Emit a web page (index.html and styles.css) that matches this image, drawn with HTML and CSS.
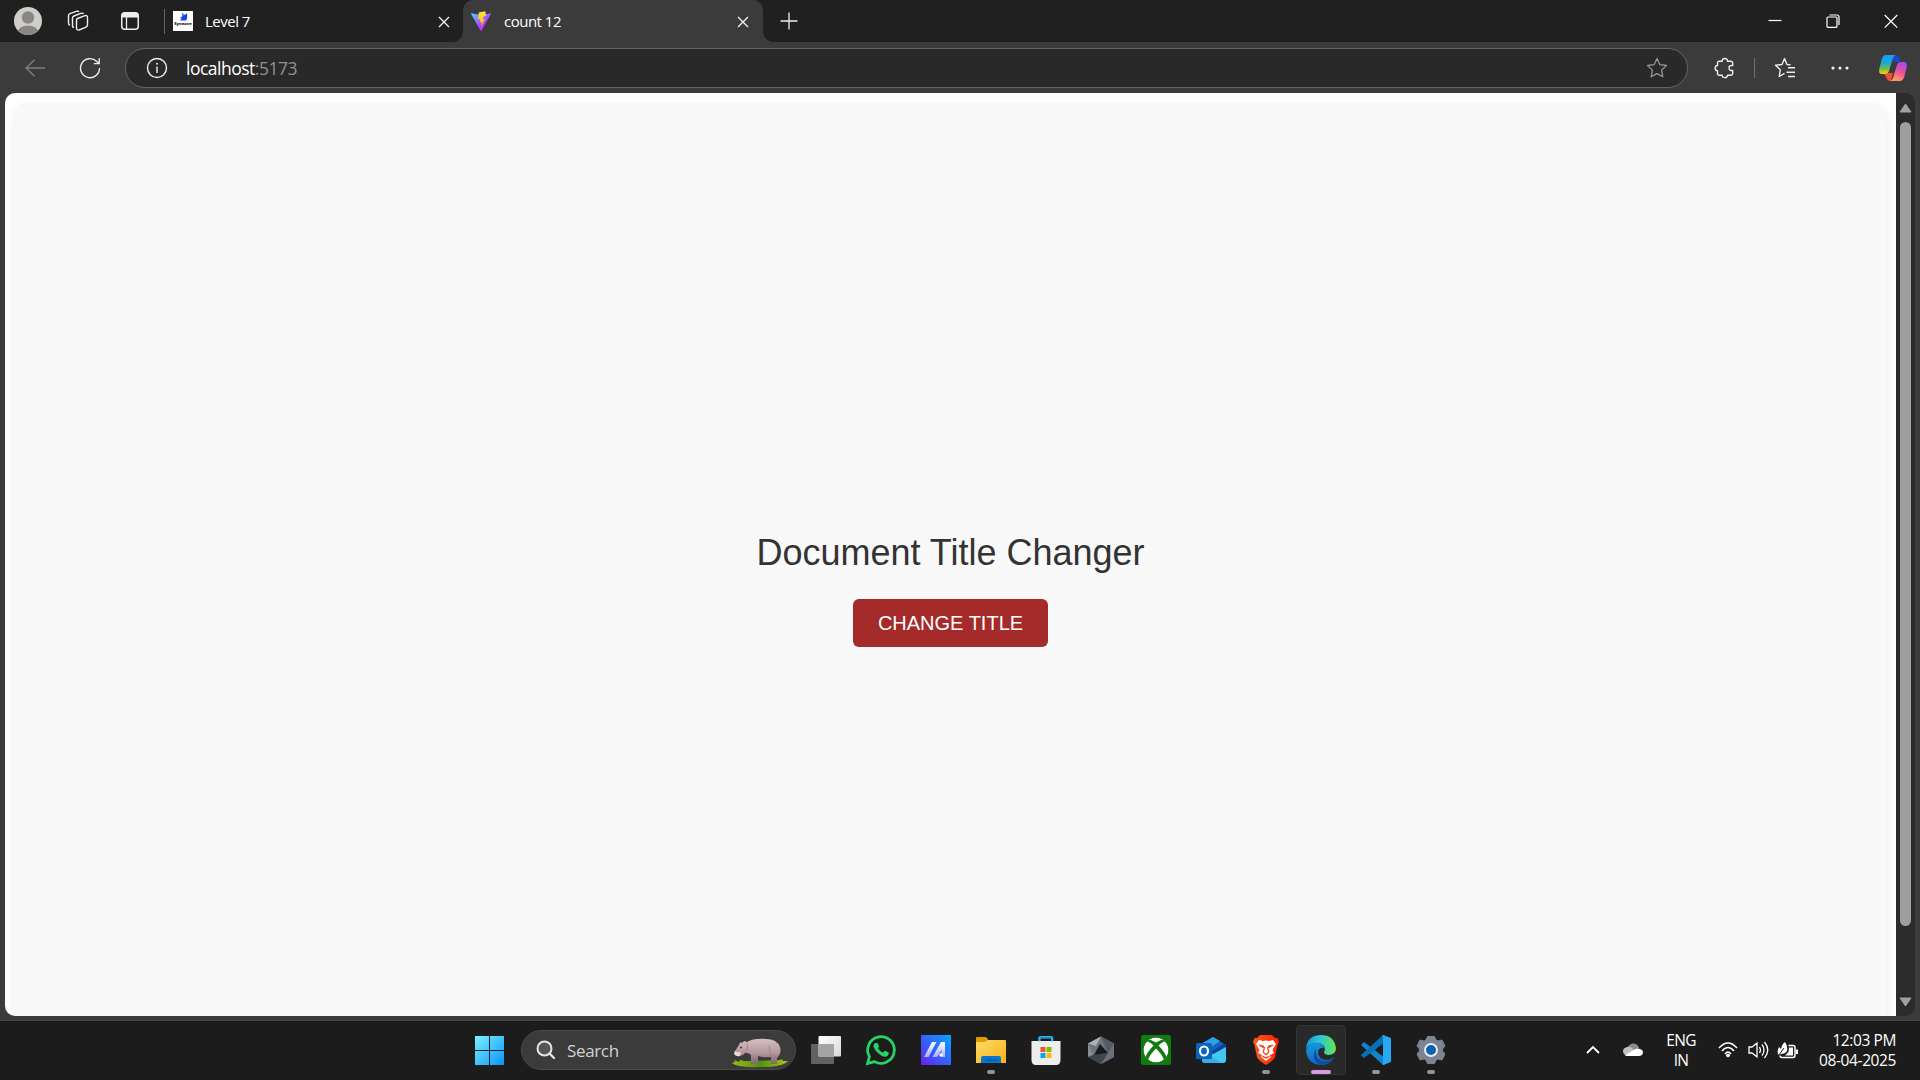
FILE: index.html
```html
<!DOCTYPE html>
<html lang="en">
<head>
<meta charset="utf-8">
<title>count 12</title>
<link rel="stylesheet" href="styles.css">
</head>
<body>
<div class="screen">
  <header class="tabstrip">
    <svg class="avatar" viewBox="0 0 28 28"><defs><clipPath id="av"><circle cx="14" cy="14" r="14"/></clipPath></defs><g clip-path="url(#av)"><rect width="28" height="28" fill="#d0ceca"/><circle cx="14" cy="10.500" r="6.200" fill="#8b8785"/><ellipse cx="14" cy="25.500" rx="10.500" ry="7" fill="#8b8785"/></g></svg>
    <svg class="spaces line" viewBox="0 0 22 22"><path d="M10.500 8.500 18 5.700Q20.500 5 20.500 7.500V14.500Q20.500 16.500 18.500 17.300L12 20Q9.500 20.500 9.500 18V10.500Q9.500 9 10.500 8.500ZM7 17.500Q5.500 17.500 5.500 15.500V8Q5.500 6.500 7 6L14.500 3.200Q16 3 16.500 4M3 15.200Q1.500 14.800 1.500 13V5.700Q1.500 4.200 3 3.700L10 1.200Q11.500 1 12 2"/></svg>
    <svg class="vtabs" viewBox="0 0 18 18"><rect x=".75" y=".75" width="16.500" height="16.500" rx="3" fill="none" stroke="#eee" stroke-width="1.500"/><path d="M1 5V3.500Q1 1 3.500 1H14.500Q17 1 17 3.500V5.500H1Z" fill="#eee"/><path d="M5.500 5V17" stroke="#eee" stroke-width="1.300"/></svg>
    <div class="strip-divider"></div>
    <div class="tab">
      <div class="favicon symbol"><svg viewBox="0 0 10 8"><path d="M3 0H5V2L9 0V5L8 8H1L3 5H1L4 3Z" fill="#1644ef"/></svg><span>Synnove</span></div>
      <span class="tab-title">Level 7</span>
      <svg class="x" viewBox="0 0 12 12"><path d="M1 1 11 11M11 1 1 11"/></svg>
    </div>
    <div class="tab active">
      <svg class="favicon" viewBox="0 0 20 20"><defs><linearGradient id="v1" x2="1" y2="1"><stop stop-color="#41d1ff"/><stop offset=".65" stop-color="#bd34fe"/></linearGradient><linearGradient id="v2" x2="0" y2="1"><stop stop-color="#ffea43"/><stop offset="1" stop-color="#ffa800"/></linearGradient></defs><path d="M.6 2.300 10 4 19.400 2.300Q20.300 2.300 19.700 3.300L10.600 19.400Q10 20 9.500 19.400L.2 3.300Q-.2 2.300.6 2.300Z" fill="url(#v1)"/><path d="M14.300.2 7.800 1.400 7 8.500 9.200 8.100 8.800 11.300 10.700 10.900 10 16 14 8.300 12 8.500 12.700 5.300 15 5Z" fill="url(#v2)"/></svg>
      <span class="tab-title">count 12</span>
      <svg class="x" viewBox="0 0 12 12"><path d="M1 1 11 11M11 1 1 11"/></svg>
    </div>
    <svg class="plus" viewBox="0 0 18 18"><path d="M9 .5V17.500M.5 9H17.500" fill="none" stroke="#eee" stroke-width="1.300"/></svg>
    <div class="window-controls">
      <svg viewBox="0 0 14 14"><path d="M.5 6.500H13.500"/></svg>
      <svg viewBox="0 0 14 14"><path d="M3.500 1H11Q13 1 13 3V11"/><rect x="1" y="3" width="10" height="10.300" rx="1"/></svg>
      <svg viewBox="0 0 14 14"><path d="M.7 1 13.300 13.600M13.300 1 .7 13.600"/></svg>
    </div>
  </header>

  <nav class="toolbar">
    <svg class="back" viewBox="0 0 20 18"><path d="M9.500.7 1 9 9.500 17.300M1 9H20" fill="none" stroke="#7e7e7e" stroke-width="1.300"/></svg>
    <svg class="reload" viewBox="0 0 22 22"><path d="M20.500 11A9.500 9.500 0 1 1 17.800 4.500L20 6.500M20.200 1.200V6.600H14.800" fill="none" stroke="#eee" stroke-width="1.400"/></svg>
    <div class="address">
      <svg class="info" viewBox="0 0 22 22"><circle cx="11" cy="11" r="9.500" fill="none" stroke="#eee" stroke-width="1.400"/><path d="M11 9.500V16" stroke="#eee" stroke-width="1.400"/><circle cx="11" cy="6.800" r=".95" fill="#eee"/></svg>
      <span class="url">localhost<span>:5173</span></span>
      <svg class="star" viewBox="0 0 22 22"><path d="M11 1.500 13.800 7.600 20.500 8.500 15.600 13.100 16.800 19.800 11 16.600 5.200 19.800 6.400 13.100 1.500 8.500 8.200 7.600Z" fill="none" stroke="#959595" stroke-width="1.300" stroke-linejoin="round"/></svg>
    </div>
    <svg class="ext line" viewBox="0 0 22 22"><path d="M5 4.200H8.200Q8 1.500 10.800 1.500T13.500 4.200H17Q18.700 4.200 18.700 6V8.500Q15 8 15 11T18.700 13.500V16.500Q18.700 18.200 17 18.200H13.500Q13.500 20.600 10.800 20.600T8.200 18.200H5Q3.500 18.200 3.500 16.500V13.700Q1.200 13.700 1.200 11.200T3.500 8.500V6Q3.500 4.200 5 4.200Z"/></svg>
    <div class="bar-divider"></div>
    <svg class="favs line" viewBox="0 0 22 22"><path d="M16.500 7.800 13 7.500 10.500 1.600 8 7.500 1.500 8.300 6.300 12.800 5.200 19.500 10.500 16.400M14 10.700H21M12.500 15.200H21M14 19.500H21"/></svg>
    <svg class="dots" viewBox="0 0 18 4"><g fill="#f2f2f2"><circle cx="2" cy="2" r="1.600"/><circle cx="9" cy="2" r="1.600"/><circle cx="16" cy="2" r="1.600"/></g></svg>
    <svg class="copilot" viewBox="0 0 28 26"><defs><linearGradient id="c1" x2="0" y2="1"><stop stop-color="#1b9df5"/><stop offset=".4" stop-color="#18a8d8"/><stop offset=".7" stop-color="#65b957"/><stop offset="1" stop-color="#ffd400"/></linearGradient><linearGradient id="c2" x1=".7" x2=".3" y2="1"><stop stop-color="#a348f5"/><stop offset=".5" stop-color="#f05297"/><stop offset="1" stop-color="#ffa35e"/></linearGradient></defs><path d="M12 0H17Q19.300 0 20.200 3L21.300 7H15Z" fill="#1749cf"/><path d="M5 18H14L12 26H11Q8.500 26 7.500 23Z" fill="#f34c32"/><path d="M7 0H17Q15 0 14 3L10 16Q9 19 6 19H3Q-.8 19 .3 14L2.500 5Q3.800 0 7 0Z" fill="url(#c1)"/><path d="M22 7H25Q28.800 7 27.700 12L25.500 21Q24.200 26 21 26H11Q13 26 14 23L18 10Q19 7 22 7Z" fill="url(#c2)"/></svg>
  </nav>

  <div class="frame">
    <main class="viewport">
      <section class="card">
        <h1>Document Title Changer</h1>
        <button class="change">CHANGE TITLE</button>
      </section>
    </main>
    <aside class="scrollbar">
      <svg viewBox="0 0 13 10"><path d="M6.500 1 12 9H1Z"/></svg>
      <div class="thumb"></div>
      <svg viewBox="0 0 13 10"><path d="M6.500 9 12 1H1Z"/></svg>
    </aside>
  </div>

  <footer class="taskbar">
    <svg class="start" viewBox="0 0 29 29"><defs><linearGradient id="w" gradientUnits="userSpaceOnUse" x1="0" y1="0" x2="29" y2="29"><stop stop-color="#7cf2ff"/><stop offset="1" stop-color="#0a92fb"/></linearGradient></defs><path d="M0 0H14V14H0ZM15 0H29V14H15ZM0 15H14V29H0ZM15 15H29V29H15Z" fill="url(#w)"/></svg>
    <div class="search">
      <svg class="lens" viewBox="0 0 20 20"><circle cx="8.500" cy="8.500" r="7" fill="#555" stroke="#e2e5e7" stroke-width="2"/><path d="M13.500 13.500 18 18" stroke="#e2e5e7" stroke-width="2.300" stroke-linecap="round"/></svg>
      <span>Search</span>
      <svg class="hippo" viewBox="0 0 56 30"><defs><linearGradient id="h" x2="0" y2="1"><stop stop-color="#d8bfc0"/><stop offset=".55" stop-color="#b3989e"/><stop offset="1" stop-color="#80666d"/></linearGradient><linearGradient id="gr" x2="1"><stop stop-color="#9fba16"/><stop offset=".5" stop-color="#4f930e"/><stop offset="1" stop-color="#a6c51c"/></linearGradient></defs><path d="M0 25 3 24 2 22 7 24 8 22 12 23 20 23 48 22 50 21 51 23 56 23Q50 29 31 29Q5 30 0 25Z" fill="url(#gr)"/><path d="M7 7Q8 3 10 5L12 3 15 4Q22 0 34 1Q45 1 48 9Q50 15 45 20L45 26H39V19Q32 20 26 18V26H19V17Q15 14 13 15Q10 19 6 17Q1 16 3 13Z" fill="url(#h)"/><path d="M3 13Q6 15 9 14L8 18Q4 19 2 16Z" fill="#f0d7cf"/><circle cx="9" cy="9.500" r="1" fill="#4a3038"/><path d="M15 5Q17 9 14 13M38 7Q36 14 40 18" stroke="#997c87" stroke-width=".8" fill="none"/></svg>
    </div>
    <div class="apps">
      <div class="app"><svg viewBox="0 0 30 30"><defs><linearGradient id="tv" x2="1" y2="1"><stop stop-color="#fff"/><stop offset="1" stop-color="#d8d8d8"/></linearGradient></defs><rect x="0" y="9" width="23" height="20" rx="1" fill="#626262"/><rect x="7.500" y="1" width="22.500" height="20.500" rx="1" fill="url(#tv)"/><path d="M7.500 9H23V21.500H7.500Z" fill="#a4a4a4"/></svg></div>
      <div class="app"><svg viewBox="0 0 30 30"><path d="M1.600 28.500 3.400 21.500A13.300 13.300 0 1 1 8.500 26.600Z" fill="none" stroke="#25d366" stroke-width="2.800"/><path d="M9.200 8H11Q11.700 8 12 8.800L13 11.200Q13.200 11.700 12 13.300Q13.700 16.500 17 17.800L18.500 16.100Q19 15.600 19.600 15.900L22.300 17.200Q23 17.600 22.700 18.700Q22 21.800 18.800 21.700Q15.800 21.500 12 18T7.400 11.500Q7.300 9.200 9.200 8Z" fill="#25d366"/></svg></div>
      <div class="app"><svg viewBox="0 0 30 30"><defs><linearGradient id="ma" x1="0" y1="1" x2="1" y2="0"><stop stop-color="#6920ef"/><stop offset=".5" stop-color="#3264fb"/><stop offset="1" stop-color="#05a5ff"/></linearGradient><linearGradient id="mw" x2="0" y2="1"><stop stop-color="#fff"/><stop offset="1" stop-color="#a9b0f8"/></linearGradient></defs><rect width="30" height="30" fill="url(#ma)"/><path d="M11 7H15.500L7.500 22H3ZM20 7H24V22H20.500V15L16 22H11.500Z" fill="url(#mw)"/><circle cx="20" cy="20" r="1.800" fill="#fff"/></svg></div>
      <div class="app running"><svg viewBox="0 0 30 30"><defs><linearGradient id="fo" x2="1" y2="1"><stop stop-color="#ffda65"/><stop offset="1" stop-color="#fbb21c"/></linearGradient></defs><path d="M0 3Q0 2 1 2H9Q10 2 11 3L13 6V12H0Z" fill="#df9d00"/><path d="M0 7H9L12 5H29Q30 5 30 6V28H0Z" fill="url(#fo)"/><path d="M5 28V23Q5 21 7 21H23Q25 21 25 23V28Z" fill="#0876ca"/><path d="M9 25H21" stroke="#034d94"/></svg></div>
      <div class="app"><svg viewBox="0 0 30 30"><path d="M8 8V3Q8 1.700 9.500 1.700H20Q21.500 1.700 21.500 3V8" fill="none" stroke="#24b9f3" stroke-width="1.600"/><path d="M.5 6H29.500V25Q29.500 30 25 30H5Q.5 30 .5 25Z" fill="#ededed"/><path d="M8 6H9V3H20.500V6H22" fill="none" stroke="#24b9f3"/><path d="M9.500 12H14.500V17H9.500Z" fill="#f35325"/><path d="M15.500 12H20.500V17H15.500Z" fill="#81bc06"/><path d="M9.500 18H14.500V23H9.500Z" fill="#05a6f0"/><path d="M15.500 18H20.500V23H15.500Z" fill="#ffba08"/></svg></div>
      <div class="app"><svg viewBox="0 0 30 30"><path d="M15 1.500 28 8.500V22L15 29 2 22V8.500Z" fill="#6d747c"/><path d="M15 1.500 2 8.500 10 11Z" fill="#a9b0b7"/><path d="M15 1.500 28 8.500 22 18Z" fill="#535a62"/><path d="M2 8.500V22L7 20Z" fill="#858d96"/><path d="M2 22 15 29 28 22 22 18 7 20Z" fill="#3f464e"/><path d="M15 29 28 22V9L22 18Z" fill="#69717b"/><path d="M14 9 22 18 8 20Z" fill="#17191c"/></svg></div>
      <div class="app"><svg viewBox="0 0 30 30"><defs><clipPath id="xb"><circle cx="15" cy="15" r="12.500"/></clipPath></defs><rect width="30" height="30" rx="2.500" fill="#107c10"/><g clip-path="url(#xb)"><circle cx="15" cy="15" r="12.500" fill="#fff"/><path d="M5 4Q10 4 15 7.500Q20 4 25 4L26 6Q22 6 17.500 10.500Q25 18 27 26L24 27Q21 19 15 13.500Q9 19 6 27L3 26Q5 18 12.500 10.500Q8 6 4 6Z" fill="#107c10"/></g></svg></div>
      <div class="app"><svg viewBox="0 0 30 30"><path d="M5 9 17 2 30 10V17L15 23 5 16Z" fill="#0c67c4"/><path d="M5 9 17 2 24 6 11 15Z" fill="#2f9fe0"/><path d="M15 17 28 8.500 30 10V13L19 20Z" fill="#123f91"/><path d="M30 12V25Q30 28 27 28H10Q6 28 6 25Z" fill="#40c8f3"/><path d="M6 17 26 28H9Q6 28 6 25Z" fill="#35aee9"/><rect y="8" width="16" height="16" rx="1.500" fill="#0964bd"/><ellipse cx="8" cy="16" rx="4" ry="4.500" fill="none" stroke="#fff" stroke-width="2.200"/></svg></div>
      <div class="app running"><svg viewBox="0 0 30 30"><defs><linearGradient id="br" x2="1"><stop stop-color="#ff5a1e"/><stop offset="1" stop-color="#ff1d00"/></linearGradient></defs><path d="M9 0H21L24 3 26.500 3 28 7 26.500 10 24 22Q23 25 15 30Q7 25 6 22L3.500 10 2 7 3.500 3 6 3Z" fill="url(#br)"/><path d="M8 5 12 6Q15 5 18 6L22 5 25 9 21.500 15 23 18 19 20 20 22 15 26 10 22 11 20 7 18 8.500 15 5 9Z" fill="#fff"/><path d="M8 10 13 11 12 13ZM22 10 17 11 18 13ZM13.500 12 12 17 15 19 18 17 16.500 12 17.500 18 15 20 12.500 18ZM11 21 15 22.500 19 21 15 23.500Z" fill="#f53b11" stroke="#f53b11" stroke-width=".7"/></svg></div>
      <div class="app running current"><svg viewBox="0 0 30 30"><defs><linearGradient id="e1" x2="1"><stop stop-color="#1497df"/><stop offset=".45" stop-color="#2bc5d8"/><stop offset="1" stop-color="#65e84e"/></linearGradient><linearGradient id="e2" x2="0" y2="1"><stop stop-color="#1897e0"/><stop offset="1" stop-color="#1067c5"/></linearGradient></defs><path d="M0 14Q1 0 15 0Q28 0 30 13Q30 20 22 20Q16 19 19 15Q19 9 12 8Q4 7 0 14Z" fill="url(#e1)"/><path d="M0 15Q3 8 10 8Q17 8 18 13Q13 12 12 17Q12 24 20 25Q25 25 28 22Q25 30 15 30Q1 29 0 15Z" fill="url(#e2)"/><path d="M10 14Q9 26 19 26Q24 26 28 22Q25 30 15 30Q7 27 8 19Q8 16 10 14Z" fill="#124c9f"/></svg></div>
      <div class="app running"><svg viewBox="0 0 30 30"><path d="M0 10 3 7 24 23V30L21 29Z" fill="#1582cc"/><path d="M0 20 3 23 24 7V0L21 1Z" fill="#0870b8"/><path d="M22 0 30 3V27L22 30 21 29 22 28V2L21 1Z" fill="#29a8f2"/></svg></div>
      <div class="app running"><svg viewBox="0 0 30 30"><path d="M11.500 1.500H18.500L20 5 22 6 26 5 29 11 26.500 14V16L29 19 26 25 22 24 20 25 18.500 28.500H11.500L10 25 8 24 4 25 1 19 3.500 16V14L1 11 4 5 8 6 10 5Z" fill="#7b8490" stroke="#7b8490" stroke-linejoin="round"/><circle cx="15" cy="15" r="6" fill="#0e62b6" stroke="#ececec" stroke-width="2"/></svg></div>
    </div>
    <div class="tray">
      <svg class="chev" viewBox="0 0 14 10"><path d="M1 8 7 2 13 8" fill="none" stroke="#fff" stroke-width="1.800"/></svg>
      <svg class="cloud" viewBox="0 0 20 14"><path d="M4 5Q7 0 11 .5Q15 1 16 5L17 8H3Z" fill="#8b8b8b"/><path d="M4 4Q8 3 11 7L17 10 3 12Q0 11 0 8Q0 5 4 4Z" fill="#c1c1c1"/><path d="M2 12 11 7Q13 5 16 6Q20 6 20 10Q19 13 16 13H4Q2 13 2 12Z" fill="#fff"/></svg>
      <div class="lang">ENG<br>IN</div>
      <svg class="wifi" viewBox="0 0 20 16"><path d="M1 6Q10-4 19 6M4 9Q10 2 16 9M7 12Q10 8 13 12" fill="none" stroke="#fff" stroke-width="1.500"/><circle cx="10" cy="13.300" r="1.900" fill="#fff"/></svg>
      <svg class="sound" viewBox="0 0 21 18"><path d="M1 6H4L9 2V16L4 12H1ZM11.500 6Q13.500 9 11.500 12M14 3.500Q18 9 14 14.500M16.500 1Q23 9 16.500 17" fill="none" stroke="#fff" stroke-width="1.300"/></svg>
      <svg class="battery" viewBox="0 0 20 17"><path d="M10.500 3.500H15Q17 3.500 17 5.500V13Q17 15.500 15 15.500H4Q2 15.500 2 13.500" fill="none" stroke="#fff" stroke-width="1.500"/><path d="M11 5.500H15V13.500H7L10.500 10ZM18 7.500H20V12H18ZM7 0Q10 4 9 9Q7 12 3 12L1 13 0 12Q-1 9 1 5L3 7Q4 2 7 0Z" fill="#fff"/><path d="M1 13 6 6" stroke="#1c1c1c"/></svg>
      <div class="clock">12:03 PM<br><span>08-04-2025</span></div>
    </div>
  </footer>
</div>
</body>
</html>
```

FILE: styles.css
```css
* { box-sizing: border-box; }
body { margin: 0; background: #3b3b3b; }
svg { display: block; flex: none; overflow: visible; }
.screen { width: 1920px; height: 1080px; overflow: hidden; display: flex; flex-direction: column; font-family: "Open Sans", "Noto Sans", sans-serif; color: #fff; }
.line { fill: none; stroke: #eee; stroke-width: 1.4; stroke-linejoin: round; }

.tabstrip { height: 42px; flex: none; display: flex; align-items: center; background: #202020; padding-left: 14px; }
.avatar { width: 28px; height: 28px; }
.spaces { width: 22px; height: 22px; margin-left: 25px; }
.vtabs { width: 18px; height: 18px; margin-left: 32px; }
.strip-divider { width: 1px; height: 25px; margin-left: 25px; background: #666; }
.tab { height: 42px; width: 298px; padding: 0 13px 0 8px; display: flex; align-items: center; }
.tab.active { width: 300px; background: #3b3b3b; border-radius: 10px 10px 0 0; padding-right: 14px; position: relative; }
.tab.active::before, .tab.active::after { content: ""; position: absolute; bottom: 0; width: 10px; height: 10px; }
.tab.active::before { left: -10px; background: radial-gradient(circle at 0 0, #202020 9.5px, #3b3b3b 10px); }
.tab.active::after { right: -10px; background: radial-gradient(circle at 100% 0, #202020 9.5px, #3b3b3b 10px); }
.favicon { width: 20px; height: 20px; flex: none; }
.symbol { background: #fff; display: flex; flex-direction: column; align-items: center; padding-top: 2px; }
.symbol svg { width: 9px; height: 8px; }
.symbol span { font-size: 4px; line-height: 6px; font-weight: 800; color: #111; }
.tab-title { margin-left: 12px; flex: 1; font-size: 15px; line-height: 20px; letter-spacing: -.5px; white-space: nowrap; }
.active .tab-title { margin-left: 13px; }
.x { width: 12px; height: 12px; margin-top: 2px; stroke: #eee; stroke-width: 1.4; }
.plus { width: 18px; height: 18px; margin-left: 17px; }
.window-controls { margin-left: auto; display: flex; gap: 44px; padding-right: 22px; }
.window-controls svg { width: 14px; height: 14px; fill: none; stroke: #fff; stroke-width: 1.2; }

.toolbar { height: 51px; flex: none; display: flex; align-items: center; padding: 0 13px 0 25px; }
.back { width: 20px; height: 18px; }
.reload { width: 22px; height: 22px; margin-left: 34px; }
.address { width: 1563px; height: 40px; margin-left: 24px; border: 1px solid #656565; border-radius: 20px; background: #292929; display: flex; align-items: center; padding: 0 19px 0 20px; }
.info, .star { width: 22px; height: 22px; }
.url { margin-left: 18px; margin-right: auto; font-size: 17.5px; line-height: 24px; letter-spacing: -.5px; }
.url span { color: #929292; }
.ext { width: 22px; height: 22px; margin-left: 26px; }
.bar-divider { width: 1px; height: 20px; margin-left: 18px; background: #707070; }
.favs { width: 22px; height: 22px; margin-left: 19px; }
.dots { width: 18px; height: 4px; margin-left: 35px; }
.copilot { width: 28px; height: 26px; margin-left: 30px; }

.frame { height: 928px; flex: none; display: flex; padding: 0 5px 4px; border-bottom: 1px solid #444; }
.viewport { flex: 1; background: #fff; border-radius: 10px 0 0 10px; padding: 10px 10px 0; overflow: hidden; }
.card { height: 960px; border-radius: 10px; background: #f9f9f9; box-shadow: 0 5px 12px rgba(0, 0, 0, .08); display: flex; flex-direction: column; align-items: center; padding-top: 428px; font-family: "Liberation Sans", Arial, sans-serif; }
.card h1 { margin: 0; font-size: 36px; line-height: 43px; font-weight: 400; color: #333; }
.change { margin-top: 25px; width: 195px; height: 48px; border: 0; border-radius: 6px; background: #a52a2a; color: #fff; font: 20px/24px "Liberation Sans", Arial, sans-serif; padding: 0 0 1px; }
.scrollbar { width: 19px; flex: none; background: #2b2b2b; border-radius: 0 10px 10px 0; display: flex; flex-direction: column; align-items: center; padding: 10px 0 9px; }
.scrollbar svg { width: 13px; height: 10px; fill: #a0a0a0; stroke: #a0a0a0; stroke-linejoin: round; }
.thumb { width: 11px; height: 804px; margin: 9px 0 auto; border-radius: 6px; background: #9f9f9f; }

.taskbar { height: 59px; flex: none; display: flex; align-items: center; background: #1c1c1c; padding: 0 0 1px 475px; }
.start { width: 29px; height: 29px; }
.search { width: 275px; height: 40px; margin-left: 17px; border: 1px solid #4b4b4b; border-radius: 20px; background: #3b3b3b; display: flex; align-items: center; padding: 0 7px 0 14px; color: #d2d2d2; font-size: 17px; }
.lens { width: 20px; height: 20px; }
.search span { margin-left: 11px; letter-spacing: -.35px; }
.hippo { width: 56px; height: 30px; margin-left: auto; margin-top: 6px; }
.apps { display: flex; margin-left: 5px; }
.app { width: 50px; height: 50px; margin-right: 5px; display: grid; place-items: center; position: relative; }
.app svg { width: 30px; height: 30px; }
.current { background: #292929; border-radius: 5px; box-shadow: inset 0 0 0 1px #343434; }
.running::after { content: ""; position: absolute; bottom: 1px; left: 21px; width: 8px; height: 4px; border-radius: 2px; background: #949494; }
.current::after { left: 15px; width: 20px; background: #d99be0; }
.tray { margin-left: auto; padding-right: 24px; display: flex; align-items: center; font-size: 15.5px; line-height: 20px; }
.chev { width: 14px; height: 10px; }
.cloud { width: 20px; height: 14px; margin-left: 23px; }
.lang { width: 40px; margin-left: 18px; text-align: center; letter-spacing: -.7px; }
.wifi { width: 20px; height: 16px; margin-left: 17px; }
.sound { width: 21px; height: 18px; margin-left: 10px; }
.battery { width: 20px; height: 17px; margin-left: 9px; }
.clock { width: 98px; text-align: right; letter-spacing: -.4px; white-space: nowrap; }
```
